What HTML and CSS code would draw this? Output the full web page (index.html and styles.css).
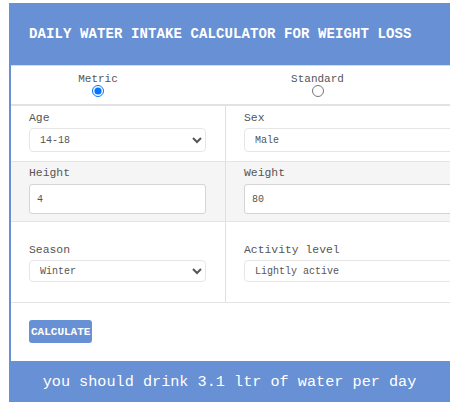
FILE: index.html
```html
<!DOCTYPE html>
<html lang="en">
<head>
    <meta charset="UTF-8">
    <meta name="viewport" content="width=device-width, initial-scale=1.0">
    <title>Daily Water Intake Calculator</title>
    <link rel="stylesheet" href="styles.css">
</head>
<body>
    <div class="calc">
        <h1 class="calc-title">DAILY WATER INTAKE CALCULATOR FOR WEIGHT LOSS</h1>

        <div class="units">
            <label class="unit">
                <span>Metric</span>
                <input type="radio" name="units" value="metric" checked>
            </label>
            <label class="unit">
                <span>Standard</span>
                <input type="radio" name="units" value="standard">
            </label>
        </div>

        <div class="row row-top">
            <div class="cell">
                <label for="age">Age</label>
                <select id="age" class="field">
                    <option>14-18</option>
                    <option>19-30</option>
                    <option>31-50</option>
                    <option>51+</option>
                </select>
            </div>
            <div class="cell">
                <label for="sex">Sex</label>
                <select id="sex" class="field wide">
                    <option>Male</option>
                    <option>Female</option>
                </select>
            </div>
        </div>

        <div class="row row-mid">
            <div class="cell">
                <label for="height">Height</label>
                <input type="number" id="height" class="field box" value="4">
            </div>
            <div class="cell">
                <label for="weight">Weight</label>
                <input type="number" id="weight" class="field box wide" value="80">
            </div>
        </div>

        <div class="row row-low">
            <div class="cell">
                <label for="season">Season</label>
                <select id="season" class="field">
                    <option>Winter</option>
                    <option>Spring</option>
                    <option>Summer</option>
                    <option>Autumn</option>
                </select>
            </div>
            <div class="cell">
                <label for="activity">Activity level</label>
                <select id="activity" class="field wide">
                    <option>Lightly active</option>
                    <option>Sedentary</option>
                    <option>Moderately active</option>
                    <option>Very active</option>
                </select>
            </div>
        </div>

        <div class="actions">
            <button onclick="calculate()">CALCULATE</button>
        </div>

        <p class="result" id="result">you should drink 3.1 ltr of water per day</p>
    </div>

    <script>
        function calculate() {
            const weight = parseFloat(document.getElementById('weight').value) || 0;
            const season = document.getElementById('season').value;
            const activity = document.getElementById('activity').value;

            let litres = weight * 0.035;
            if (season === 'Summer') litres += 0.5;
            if (activity === 'Moderately active') litres += 0.3;
            if (activity === 'Very active') litres += 0.6;

            document.getElementById('result').textContent =
                `you should drink ${litres.toFixed(1)} ltr of water per day`;
        }
    </script>
</body>
</html>
```

FILE: styles.css
```css
html, body {
    overflow: hidden;
}
body {
    margin: 0;
    font-family: "Liberation Mono", "DejaVu Sans Mono", monospace;
    color: #444;
    background-color: #fff;
}
.calc {
    margin: 3px 0 0 9px;
    width: 441px;
    overflow: hidden;
    box-sizing: border-box;
    border-left: 2px solid #6890d4;
}
.calc-title {
    margin: 0;
    height: 62px;
    padding-left: 18px;
    display: flex;
    align-items: center;
    background-color: #6890d4;
    color: #fff;
    font-size: 14px;
    letter-spacing: 0.1px;
    border-bottom: 1px solid #dcdcdc;
}
.units {
    display: grid;
    grid-template-columns: 174px 1fr;
    padding: 8px 0 7px;
    border-bottom: 2px solid #e2e2e2;
}
.unit {
    display: flex;
    flex-direction: column;
    align-items: center;
    font-size: 11px;
    line-height: 11px;
    color: #555;
}
.unit input {
    margin: 0;
    width: 12px;
    height: 12px;
}
.row {
    display: grid;
    grid-template-columns: 215px 1fr;
    border-bottom: 1px solid #e4e4e4;
}
.cell {
    display: flex;
    flex-direction: column;
    align-items: flex-start;
    gap: 3px;
    padding: 5px 0 9px 18px;
}
.cell:first-child {
    border-right: 1px solid #e0e0e0;
}
.cell label {
    font-size: 11.4px;
    line-height: 14px;
    color: #555;
}
.row-mid {
    background-color: #f5f5f5;
}
.row-mid .cell {
    padding: 4px 0 7px 18px;
    gap: 4px;
}
.row-low .cell {
    padding: 21px 0 20px 18px;
    gap: 3px;
}
.field {
    box-sizing: border-box;
    width: 177px;
    height: 24px;
    padding: 0 4px 0 6px;
    font-family: "Liberation Mono", monospace;
    font-size: 10px;
    color: #555;
    background-color: #fff;
    border: 1px solid #e6e6e6;
    border-radius: 4px;
}
.field.box {
    height: 30px;
    padding-left: 7px;
    border: 1px solid #d4d4d4;
    border-radius: 3px;
}
.row-low .field {
    height: 22px;
}
.field.wide {
    width: 240px;
}
.actions {
    padding: 17px 0 18px 18px;
}
button {
    height: 23px;
    padding: 0 2px;
    border: none;
    border-radius: 3px;
    background-color: #6890d4;
    color: #fff;
    font-family: "Liberation Mono", monospace;
    font-weight: bold;
    font-size: 11px;
    cursor: pointer;
}
button:hover {
    background-color: #5a80c4;
}
.result {
    margin: 0 0 0 -2px;
    height: 42px;
    padding-top: 12px;
    box-sizing: border-box;
    background-color: #6890d4;
    color: #fff;
    text-align: center;
    font-size: 15.2px;
}
```
